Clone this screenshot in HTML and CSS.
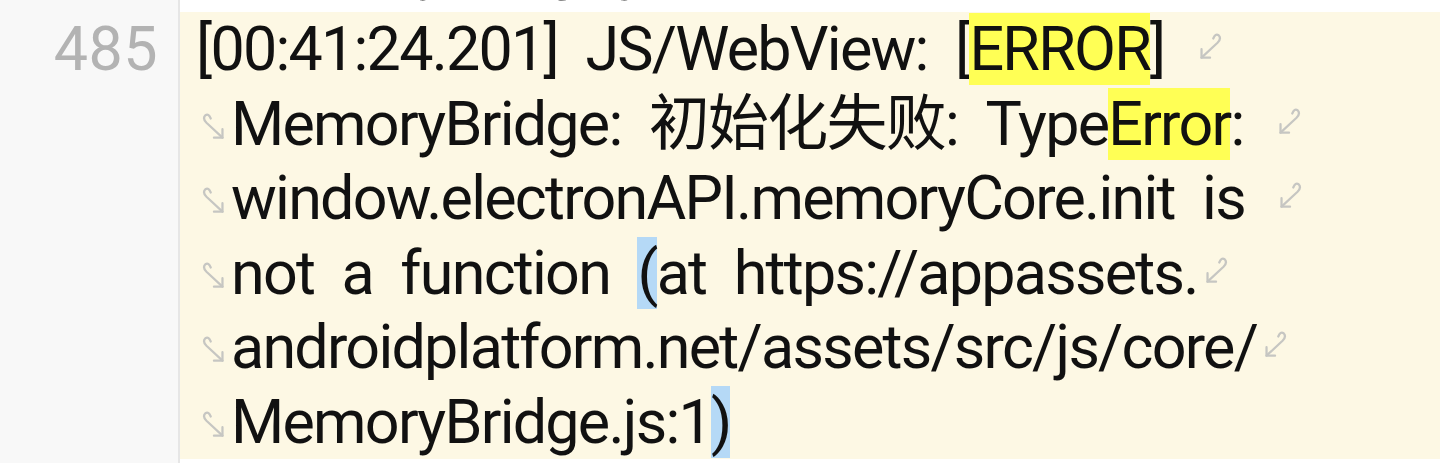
FILE: index.html
```html
<!DOCTYPE html>
<html lang="zh-CN">
<head>
<meta charset="utf-8">
<title>Log viewer</title>
<link rel="stylesheet" href="styles.css">
</head>
<body>
<div class="editor">
  <div class="row row-prev">
    <div class="gutter"></div>
    <div class="code">
      <div class="ln cont"><svg class="wrap-s" viewBox="0 0 24 30"><path d="M8 7 Q6 2 3 4 Q0 7 4 11 L19 25"/><path d="M19 17 V25 H11"/></svg><span>MemoryBridge.js</span></div>
    </div>
  </div>
  <div class="row row-current">
    <div class="gutter"><span class="num">485</span></div>
    <div class="code">
      <div class="ln first"><span>[00:41:24.201] JS/WebView: [<mark class="hl">ERROR</mark>] </span><svg class="wrap-e" viewBox="0 0 24 30"><path d="M16 7 Q18 2 21 4 Q24 7 20 11 L5 25"/><path d="M5 17 V25 H13"/></svg></div>
      <div class="ln cont"><svg class="wrap-s" viewBox="0 0 24 30"><path d="M8 7 Q6 2 3 4 Q0 7 4 11 L19 25"/><path d="M19 17 V25 H11"/></svg><span>MemoryBridge: 初始化失败: Type<mark class="hl">Error</mark>: </span><svg class="wrap-e" viewBox="0 0 24 30"><path d="M16 7 Q18 2 21 4 Q24 7 20 11 L5 25"/><path d="M5 17 V25 H13"/></svg></div>
      <div class="ln cont"><svg class="wrap-s" viewBox="0 0 24 30"><path d="M8 7 Q6 2 3 4 Q0 7 4 11 L19 25"/><path d="M19 17 V25 H11"/></svg><span>window.electronAPI.memoryCore.init is </span><svg class="wrap-e" viewBox="0 0 24 30"><path d="M16 7 Q18 2 21 4 Q24 7 20 11 L5 25"/><path d="M5 17 V25 H13"/></svg></div>
      <div class="ln cont"><svg class="wrap-s" viewBox="0 0 24 30"><path d="M8 7 Q6 2 3 4 Q0 7 4 11 L19 25"/><path d="M19 17 V25 H11"/></svg><span>not a function <mark class="br">(</mark>at https://appassets.</span><svg class="wrap-e" viewBox="0 0 24 30"><path d="M16 7 Q18 2 21 4 Q24 7 20 11 L5 25"/><path d="M5 17 V25 H13"/></svg></div>
      <div class="ln cont"><svg class="wrap-s" viewBox="0 0 24 30"><path d="M8 7 Q6 2 3 4 Q0 7 4 11 L19 25"/><path d="M19 17 V25 H11"/></svg><span>androidplatform.net/assets/src/js/core/</span><svg class="wrap-e" viewBox="0 0 24 30"><path d="M16 7 Q18 2 21 4 Q24 7 20 11 L5 25"/><path d="M5 17 V25 H13"/></svg></div>
      <div class="ln cont"><svg class="wrap-s" viewBox="0 0 24 30"><path d="M8 7 Q6 2 3 4 Q0 7 4 11 L19 25"/><path d="M19 17 V25 H11"/></svg><span>MemoryBridge.js:1<mark class="br">)</mark></span></div>
    </div>
  </div>
  <div class="row row-next">
    <div class="gutter"></div>
    <div class="code"></div>
  </div>
</div>
</body>
</html>
```

FILE: styles.css
```css
html, body {
  margin: 0;
  padding: 0;
  background: #ffffff;
}

.editor {
  width: 1440px;
  height: 463px;
  overflow: hidden;
  display: flex;
  flex-direction: column;
  font-family: Roboto, "Noto Sans CJK SC", sans-serif;
  font-size: 61px;
  color: #111111;
}

.row {
  display: grid;
  grid-template-columns: 178px 2px 1fr;
  flex: none;
}

.row::before {
  content: "";
  grid-column: 2;
  grid-row: 1;
  background: #e6e6e6;
}

.gutter {
  grid-column: 1;
  grid-row: 1;
  background: #f8f8f8;
  text-align: right;
  padding-right: 20px;
  line-height: 74.5px;
  color: #b3b3b3;
  letter-spacing: 0.5px;
}

.code {
  grid-column: 3;
  grid-row: 1;
  padding-left: 16px;
  letter-spacing: -1.75px;
  word-spacing: 14px;
}

.row-prev {
  height: 12px;
  grid-template-rows: 12px;
  overflow: hidden;
}

.row-prev .code {
  height: 12px;
  min-height: 0;
  overflow: hidden;
  display: flex;
  flex-direction: column;
  justify-content: flex-end;
  background: #ffffff;
}

.row-prev .ln {
  margin-bottom: 8px;
}

.row-current .code {
  background: #fdf8e4;
}

.row-next {
  flex: 1;
}

.row-next .code {
  background: #ffffff;
}

.ln {
  flex: none;
  height: 74.5px;
  line-height: 74.5px;
  white-space: pre;
  display: flex;
  align-items: center;
}

.ln > span {
  line-height: 74.5px;
}

.cont {
  padding-left: 8px;
}

.hl {
  background: #ffff55;
  color: inherit;
}

.br {
  background: #b5d9f6;
  color: inherit;
}

.wrap-s,
.wrap-e {
  width: 26px;
  height: 32px;
  flex: none;
  fill: none;
  stroke: #c6c6c2;
  stroke-width: 2.1;
  stroke-linecap: round;
  stroke-linejoin: round;
}

.wrap-s {
  margin-right: 3px;
  margin-top: 6px;
  margin-left: -2px;
}

.wrap-e {
  margin-left: 4px;
  margin-top: -4px;
}
```
